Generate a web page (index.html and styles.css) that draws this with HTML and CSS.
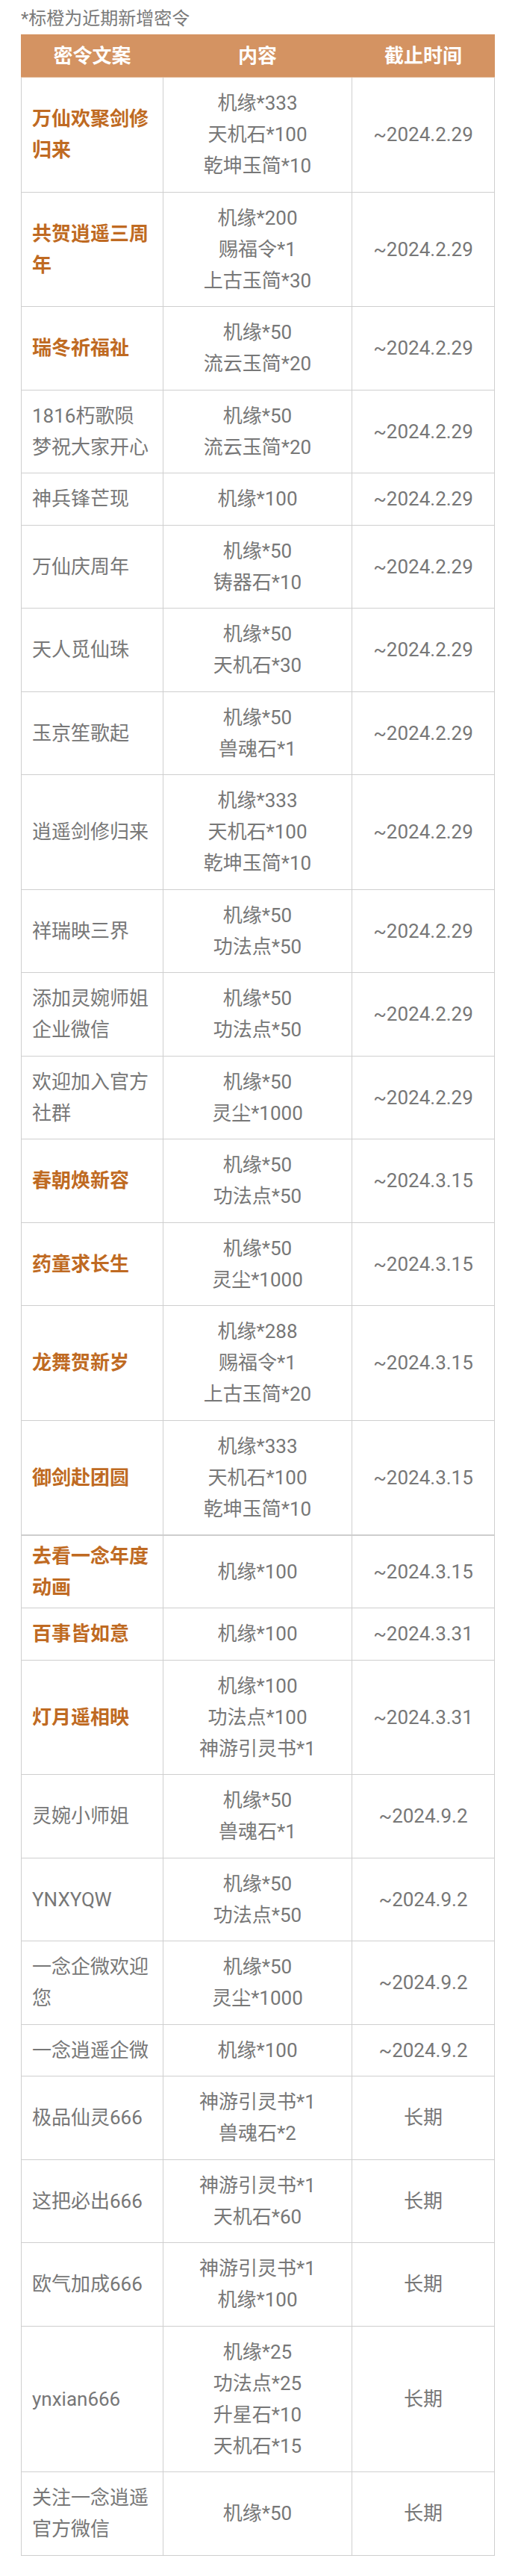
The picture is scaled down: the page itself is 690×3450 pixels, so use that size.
FILE: index.html
```html
<!DOCTYPE html>
<html lang="zh-CN">
<head>
<meta charset="utf-8">
<title>密令</title>
<link rel="stylesheet" href="styles.css">
</head>
<body>
<div class="page">
  <p class="note">*标橙为近期新增密令</p>
  <div class="codes">
    <div class="row head"><div class="cell">密令文案</div><div class="cell">内容</div><div class="cell">截止时间</div></div>
    <div class="row"><div class="cell name hot">万仙欢聚剑修归来</div><div class="cell content">机缘*333<br>天机石*100<br>乾坤玉简*10</div><div class="cell date">~2024.2.29</div></div>
    <div class="row"><div class="cell name hot">共贺逍遥三周年</div><div class="cell content">机缘*200<br>赐福令*1<br>上古玉简*30</div><div class="cell date">~2024.2.29</div></div>
    <div class="row"><div class="cell name hot">瑞冬祈福祉</div><div class="cell content">机缘*50<br>流云玉简*20</div><div class="cell date">~2024.2.29</div></div>
    <div class="row"><div class="cell name">1816朽歌陨梦祝大家开心</div><div class="cell content">机缘*50<br>流云玉简*20</div><div class="cell date">~2024.2.29</div></div>
    <div class="row"><div class="cell name">神兵锋芒现</div><div class="cell content">机缘*100</div><div class="cell date">~2024.2.29</div></div>
    <div class="row"><div class="cell name">万仙庆周年</div><div class="cell content">机缘*50<br>铸器石*10</div><div class="cell date">~2024.2.29</div></div>
    <div class="row"><div class="cell name">天人觅仙珠</div><div class="cell content">机缘*50<br>天机石*30</div><div class="cell date">~2024.2.29</div></div>
    <div class="row"><div class="cell name">玉京笙歌起</div><div class="cell content">机缘*50<br>兽魂石*1</div><div class="cell date">~2024.2.29</div></div>
    <div class="row"><div class="cell name">逍遥剑修归来</div><div class="cell content">机缘*333<br>天机石*100<br>乾坤玉简*10</div><div class="cell date">~2024.2.29</div></div>
    <div class="row"><div class="cell name">祥瑞映三界</div><div class="cell content">机缘*50<br>功法点*50</div><div class="cell date">~2024.2.29</div></div>
    <div class="row"><div class="cell name">添加灵婉师姐企业微信</div><div class="cell content">机缘*50<br>功法点*50</div><div class="cell date">~2024.2.29</div></div>
    <div class="row"><div class="cell name">欢迎加入官方社群</div><div class="cell content">机缘*50<br>灵尘*1000</div><div class="cell date">~2024.2.29</div></div>
    <div class="row"><div class="cell name hot">春朝焕新容</div><div class="cell content">机缘*50<br>功法点*50</div><div class="cell date">~2024.3.15</div></div>
    <div class="row"><div class="cell name hot">药童求长生</div><div class="cell content">机缘*50<br>灵尘*1000</div><div class="cell date">~2024.3.15</div></div>
    <div class="row"><div class="cell name hot">龙舞贺新岁</div><div class="cell content">机缘*288<br>赐福令*1<br>上古玉简*20</div><div class="cell date">~2024.3.15</div></div>
    <div class="row"><div class="cell name hot">御剑赴团圆</div><div class="cell content">机缘*333<br>天机石*100<br>乾坤玉简*10</div><div class="cell date">~2024.3.15</div></div>
    <div class="row split"><div class="cell name hot tight">去看一念年度动画</div><div class="cell content">机缘*100</div><div class="cell date">~2024.3.15</div></div>
    <div class="row"><div class="cell name hot">百事皆如意</div><div class="cell content">机缘*100</div><div class="cell date">~2024.3.31</div></div>
    <div class="row"><div class="cell name hot">灯月遥相映</div><div class="cell content">机缘*100<br>功法点*100<br>神游引灵书*1</div><div class="cell date">~2024.3.31</div></div>
    <div class="row"><div class="cell name">灵婉小师姐</div><div class="cell content">机缘*50<br>兽魂石*1</div><div class="cell date">~2024.9.2</div></div>
    <div class="row"><div class="cell name">YNXYQW</div><div class="cell content">机缘*50<br>功法点*50</div><div class="cell date">~2024.9.2</div></div>
    <div class="row"><div class="cell name">一念企微欢迎您</div><div class="cell content">机缘*50<br>灵尘*1000</div><div class="cell date">~2024.9.2</div></div>
    <div class="row"><div class="cell name">一念逍遥企微</div><div class="cell content">机缘*100</div><div class="cell date">~2024.9.2</div></div>
    <div class="row"><div class="cell name">极品仙灵666</div><div class="cell content">神游引灵书*1<br>兽魂石*2</div><div class="cell date">长期</div></div>
    <div class="row"><div class="cell name">这把必出666</div><div class="cell content">神游引灵书*1<br>天机石*60</div><div class="cell date">长期</div></div>
    <div class="row"><div class="cell name">欧气加成666</div><div class="cell content">神游引灵书*1<br>机缘*100</div><div class="cell date">长期</div></div>
    <div class="row"><div class="cell name">ynxian666</div><div class="cell content">机缘*25<br>功法点*25<br>升星石*10<br>天机石*15</div><div class="cell date">长期</div></div>
    <div class="row"><div class="cell name">关注一念逍遥官方微信</div><div class="cell content">机缘*50</div><div class="cell date">长期</div></div>
  </div>
</div>
</body>
</html>
```

FILE: styles.css
```css
html, body {
  margin: 0;
  padding: 0;
  background: #ffffff;
}

body {
  font-family: Roboto, "Noto Sans CJK SC", "Noto Sans", sans-serif;
  color: #777777;
}

.page {
  padding: 0 27px 0 28px;
}

.note {
  margin: 0 0 4px 0;
  padding-top: 8px;
  font-size: 24px;
  line-height: 34px;
  color: #7a7a7a;
}

.codes {
  width: 635px;
  font-size: 26px;
  line-height: 42px;
}

.row {
  display: grid;
  grid-template-columns: 191px 253px 191px;
  border-bottom: 1px solid #cfcfcf;
}

.row.head {
  background: #d49362;
  border-bottom: 1px solid #e2b998;
}

.row.split {
  border-top: 1px solid #cccccc;
}

.cell {
  display: flex;
  align-items: center;
  justify-content: center;
  text-align: center;
  padding: 13.25px 0;
  border-right: 1px solid #cfcfcf;
  color: #777777;
}

.cell:first-child {
  border-left: 1px solid #cfcfcf;
}

.head .cell {
  color: #ffffff;
  font-weight: 700;
  padding: 8px 0 7px;
  border-color: #d49362;
}

.cell.name {
  justify-content: flex-start;
  text-align: left;
  padding-left: 14px;
  padding-right: 17px;
}

.cell.name.hot {
  color: #bf6a22;
  font-weight: 700;
}

.cell.name.tight {
  padding-top: 6px;
  padding-bottom: 6px;
}
```
